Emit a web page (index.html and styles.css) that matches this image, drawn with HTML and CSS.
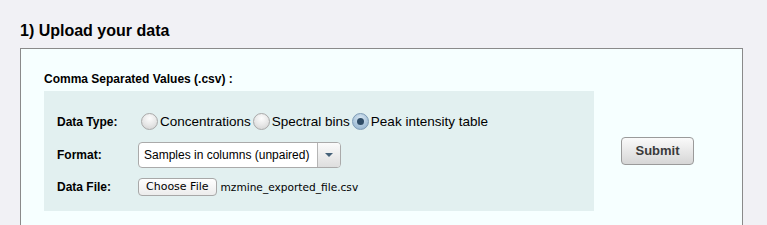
FILE: index.html
```html
<!DOCTYPE html>
<html>
<head>
<meta charset="utf-8">
<link rel="stylesheet" href="styles.css">
</head>
<body>
<div class="page">
  <h2 class="title">1) Upload your data</h2>
  <div class="box">
    <div class="csv">
      <div class="csv-title">Comma Separated Values (.csv) :</div>
      <div class="panel">
        <div class="label">Data Type:</div>
        <div class="control radios">
          <label class="radio"><span class="dot"></span>Concentrations</label>
          <label class="radio"><span class="dot"></span>Spectral bins</label>
          <label class="radio"><span class="dot checked"></span>Peak intensity table</label>
        </div>
        <div class="label">Format:</div>
        <div class="control">
          <div class="select">
            <span class="select-text">Samples in columns (unpaired)</span>
            <span class="select-arrow"><span class="tri"></span></span>
          </div>
        </div>
        <div class="label">Data File:</div>
        <div class="control file">
          <span class="file-btn">Choose File</span>
          <span class="file-name">mzmine_exported_file.csv</span>
        </div>
      </div>
    </div>
    <div class="submit-col">
      <span class="submit">Submit</span>
    </div>
  </div>
</div>
</body>
</html>
```

FILE: styles.css
```css
html, body {
  margin: 0;
  padding: 0;
  background: #f1f1f5;
}
body {
  font-family: "Liberation Sans", Arial, Helvetica, sans-serif;
  color: #000;
  overflow: hidden;
  height: 225px;
}
.page {
  padding: 21px 0 0 20px;
}
.title {
  margin: 0;
  font-size: 16px;
  font-weight: bold;
  line-height: 20px;
  height: 27px;
}
.box {
  width: 723px;
  height: 178px;
  border: 1px solid #8a8a8a;
  border-bottom: none;
  background: #f6ffff;
  display: flex;
  align-items: flex-start;
  padding-left: 23px;
  box-sizing: border-box;
}
.csv {
  padding-top: 23px;
}
.csv-title {
  font-size: 12px;
  font-weight: bold;
  line-height: 14px;
  height: 19px;
}
.panel {
  width: 550px;
  height: 120px;
  background: #e2f0f0;
  box-sizing: border-box;
  padding: 20px 0 0 13px;
  display: grid;
  grid-template-columns: 81px 1fr;
  grid-template-rows: 21px 26px 18px;
  row-gap: 10px;
  align-items: center;
}
.label {
  font-size: 12px;
  font-weight: bold;
}
.control {
  display: flex;
  align-items: center;
}
.radios {
  margin-left: 3px;
}
.radio {
  display: flex;
  align-items: center;
  font-size: 13.5px;
  margin-right: 2px;
}
.dot {
  width: 17px;
  height: 17px;
  border-radius: 50%;
  box-sizing: border-box;
  border: 1px solid #a9a9a9;
  background: radial-gradient(circle at 50% 30%, #fdfdfd 0%, #e8e8e8 50%, #cfcfcf 100%);
  margin-right: 2px;
  position: relative;
}
.dot.checked {
  border-color: #7d9bb5;
  background: radial-gradient(circle at 50% 30%, #d7e6f2 0%, #a9c4da 60%, #8fb0cc 100%);
}
.dot.checked::after {
  content: "";
  position: absolute;
  left: 4px;
  top: 4px;
  width: 7px;
  height: 7px;
  border-radius: 50%;
  background: #2e4c66;
}
.select {
  display: flex;
  width: 203px;
  height: 26px;
  box-sizing: border-box;
  border: 1px solid #aaaaaa;
  border-radius: 4px;
  background: #fff;
  overflow: hidden;
}
.select-text {
  flex: 1;
  font-size: 12px;
  line-height: 24px;
  padding-left: 5px;
}
.select-arrow {
  width: 22px;
  border-left: 1px solid #b5b5b5;
  background: linear-gradient(#fbfbfb, #dedede);
  display: flex;
  align-items: center;
  justify-content: center;
}
.tri {
  width: 0;
  height: 0;
  border-left: 4px solid transparent;
  border-right: 4px solid transparent;
  border-top: 4px solid #456178;
}
.file-btn {
  font-family: "DejaVu Sans", Verdana, sans-serif;
  font-size: 11px;
  height: 18px;
  line-height: 16px;
  box-sizing: border-box;
  padding: 0 7px;
  border: 1px solid #a8a8a8;
  border-radius: 4px;
  background: linear-gradient(#ffffff, #ececec);
}
.file-name {
  font-family: "DejaVu Sans", Verdana, sans-serif;
  font-size: 10.6px;
  margin-left: 4px;
}
.submit-col {
  margin-top: 88px;
  margin-left: 27px;
}
.submit {
  display: block;
  width: 73px;
  height: 28px;
  box-sizing: border-box;
  border: 1px solid #9a9a9a;
  border-radius: 4px;
  background: linear-gradient(#fafafa, #d6d6d6);
  font-size: 13px;
  font-weight: bold;
  color: #3a3a3a;
  text-align: center;
  line-height: 26px;
}
```
